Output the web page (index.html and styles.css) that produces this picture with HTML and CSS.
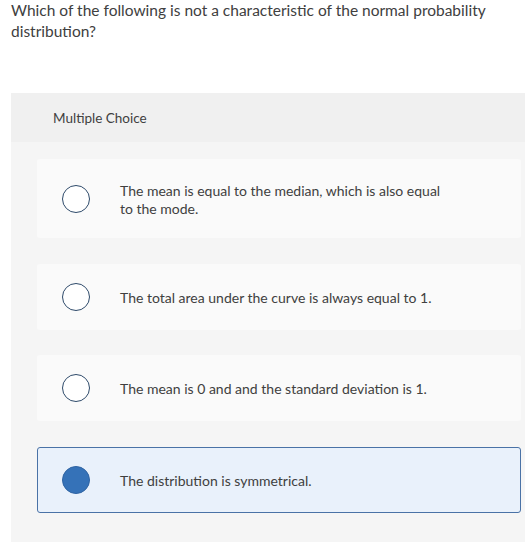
FILE: index.html
```html
<!DOCTYPE html>
<html lang="en">
<head>
<meta charset="utf-8">
<title>Question</title>
<link rel="stylesheet" href="styles.css">
</head>
<body>
<div class="page">
  <p class="prompt">Which of the following is not a characteristic of the normal probability distribution?</p>
  <section class="panel">
    <header class="panel-head">Multiple Choice</header>
    <div class="choices">
      <label class="choice">
        <span class="radio"></span>
        <span class="choice-text">The mean is equal to the median, which is also equal<br>to the mode.</span>
      </label>
      <label class="choice">
        <span class="radio"></span>
        <span class="choice-text">The total area under the curve is always equal to 1.</span>
      </label>
      <label class="choice">
        <span class="radio"></span>
        <span class="choice-text">The mean is 0 and and the standard deviation is 1.</span>
      </label>
      <label class="choice is-selected">
        <span class="radio"></span>
        <span class="choice-text">The distribution is symmetrical.</span>
      </label>
    </div>
  </section>
</div>
</body>
</html>
```
FILE: styles.css
```css
html, body {
  margin: 0;
  padding: 0;
  background: #ffffff;
}

body {
  font-family: "Lato", "Liberation Sans", sans-serif;
  color: #404040;
}

.page {
  padding-left: 11px;
  height: 542px;
  overflow: hidden;
}

.prompt {
  margin: 0;
  font-size: 15.5px;
  line-height: 21px;
  color: #404040;
  height: 93px;
}

.panel {
  background: #f5f5f5;
  min-height: 449px;
}

.panel-head {
  background: #f0f0f0;
  height: 49px;
  display: flex;
  align-items: center;
  padding-left: 42px;
  font-size: 13.5px;
  color: #404040;
}

.choices {
  display: flex;
  flex-direction: column;
  gap: 25.5px;
  padding: 17px 4px 0 26px;
}

.choice {
  display: flex;
  align-items: center;
  background: #fafafa;
  padding: 18px 0;
  border: 1px solid transparent;
  border-radius: 3px;
}

.radio {
  flex: none;
  width: 26px;
  height: 26px;
  border: 1px solid #2e4a6a;
  border-radius: 50%;
  background: #ffffff;
  margin-left: 24px;
  margin-right: 30px;
}

.choice-text {
  font-size: 14px;
  line-height: 18px;
  padding: 3.5px 0 1.5px;
  color: #404040;
}

.choice.is-selected {
  background: #e9f1fb;
  border-color: #4a72a6;
}

.choice.is-selected .radio {
  background: #3572b8;
  border-color: #2f64a3;
}
```
